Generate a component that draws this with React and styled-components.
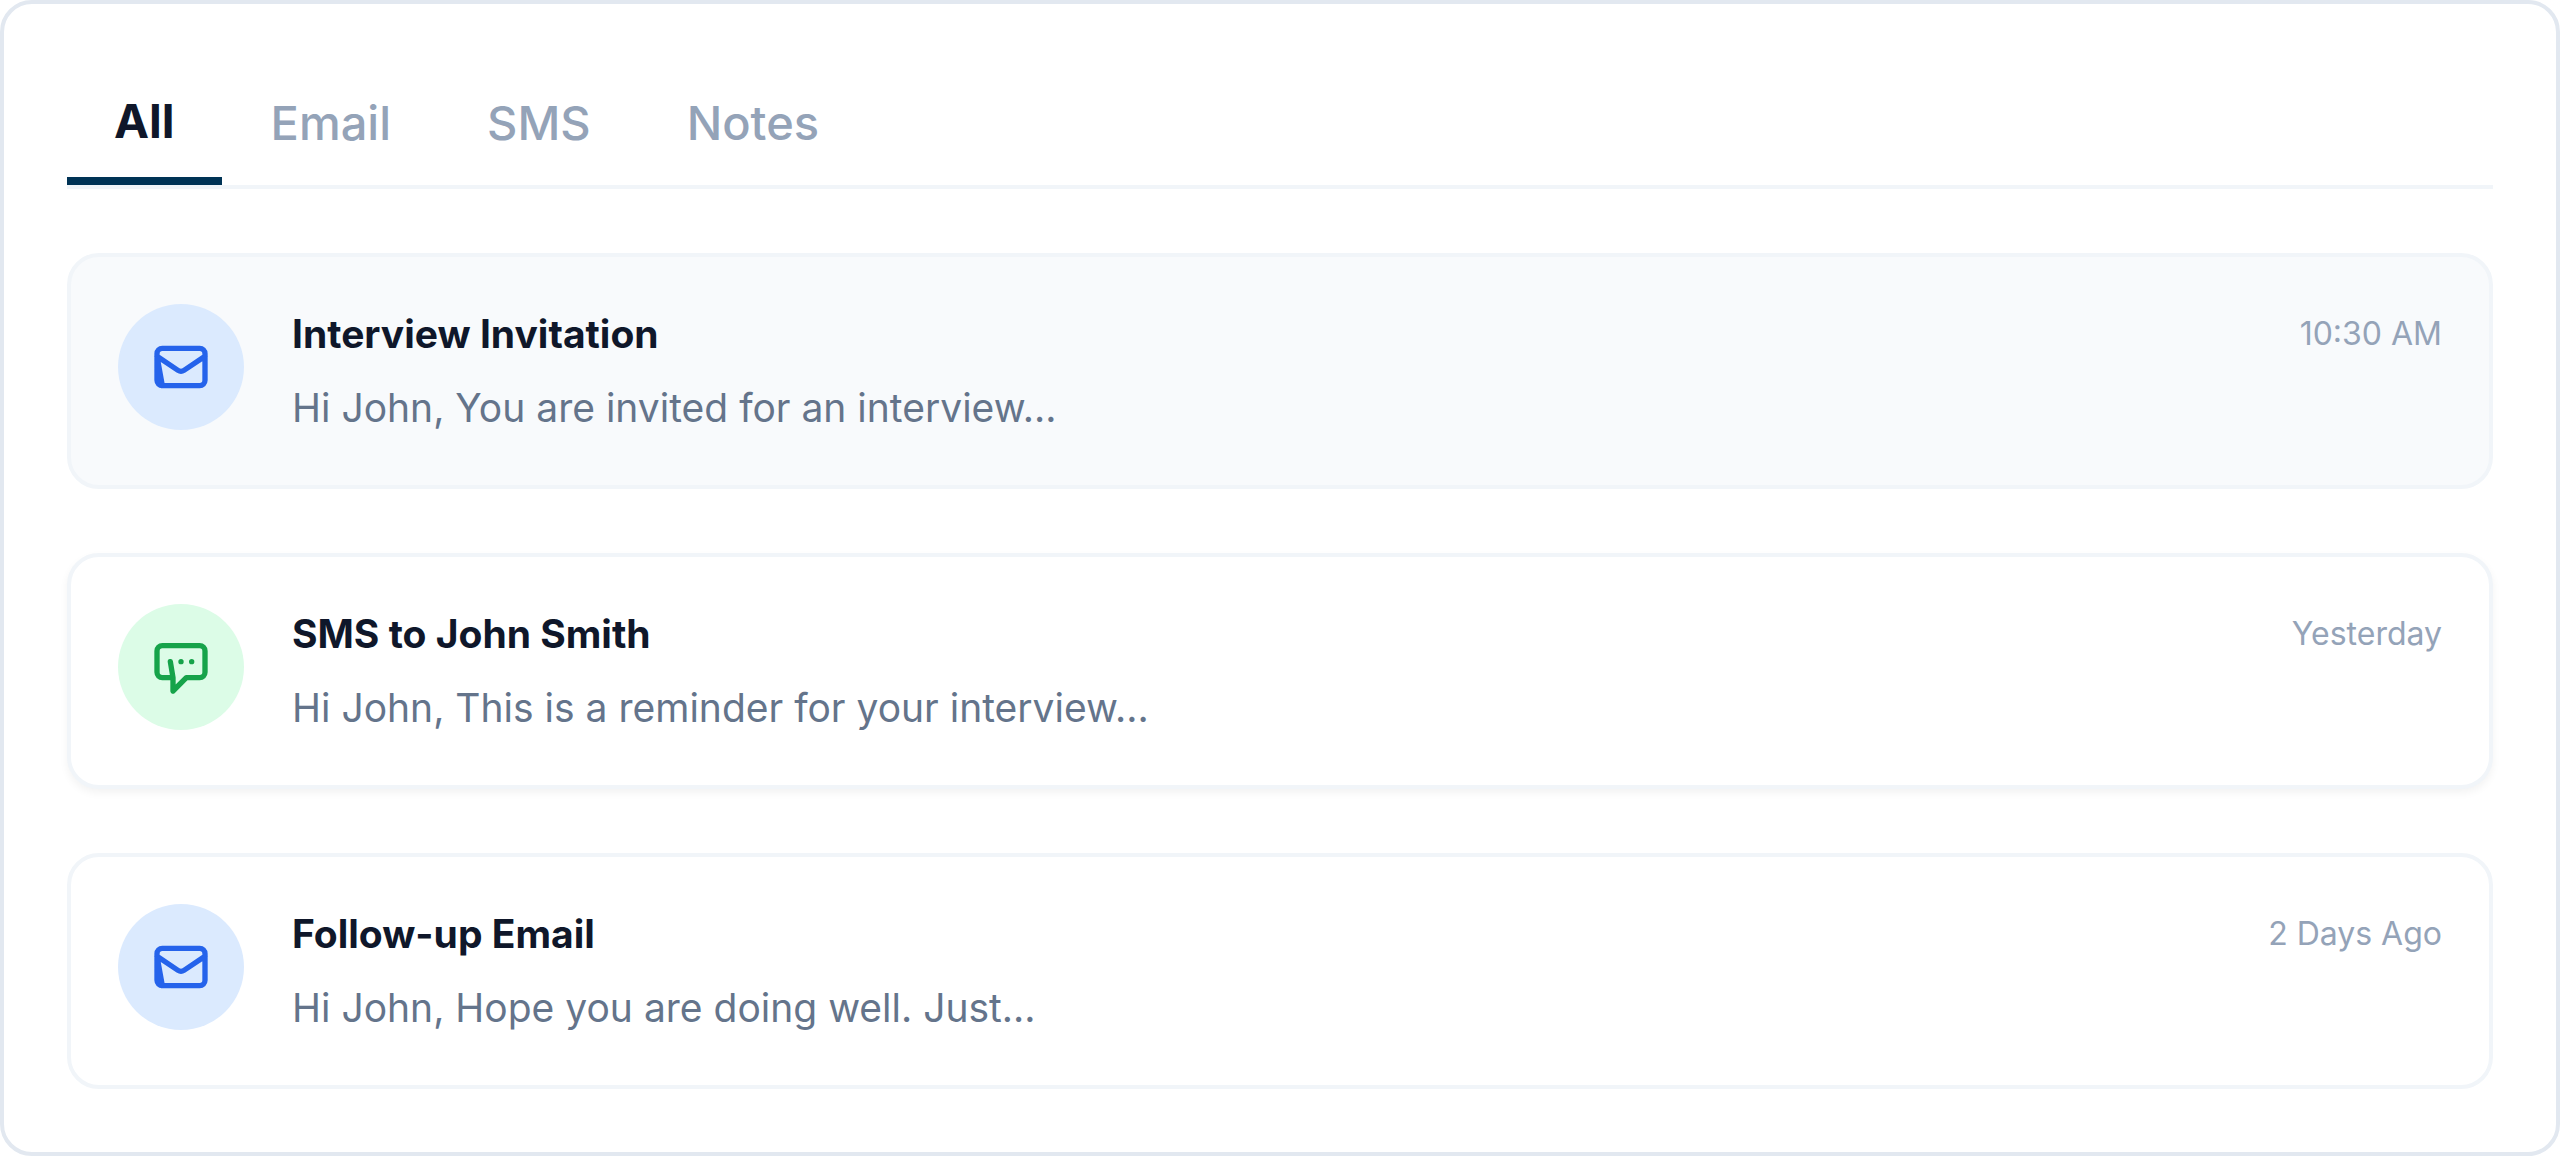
import React, { useState } from 'react'
import styled, { createGlobalStyle } from 'styled-components'

const GlobalStyle = createGlobalStyle`
  * {
    box-sizing: border-box;
  }

  body {
    margin: 0;
    background: #ffffff;
    font-family: Inter, 'Liberation Sans', sans-serif;
  }
`

const Panel = styled.main`
  padding: 63px;
  background: #ffffff;
  border: 4px solid #e2e8f0;
  border-radius: 32px;
`

const Tabs = styled.div`
  display: flex;
  align-items: center;
  gap: 2px;
  margin-bottom: 64px;
  border-bottom: 4px solid #f1f5f9;
`

const Tab = styled.button`
  padding: 24px 47px 26px;
  background: none;
  border: none;
  border-bottom: ${({ $active }) => ($active ? '8px solid #003355' : '4px solid transparent')};
  color: ${({ $active }) => ($active ? '#0f172a' : '#94a3b8')};
  font-family: inherit;
  font-size: 47px;
  font-weight: ${({ $active }) => ($active ? 700 : 500)};
  line-height: 60px;
  cursor: pointer;
`

const MessageList = styled.ul`
  display: flex;
  flex-direction: column;
  gap: 64px;
  margin: 0;
  padding: 0;
  list-style: none;
`

const Message = styled.li`
  display: flex;
  align-items: flex-start;
  gap: 48px;
  padding: 47px;
  background: ${({ $selected }) => ($selected ? '#f8fafc' : '#ffffff')};
  border: 4px solid #f1f5f9;
  border-radius: 32px;
  box-shadow: ${({ $raised }) => ($raised ? '0 4px 8px rgba(0, 0, 0, 0.05)' : 'none')};
`

const IconCircle = styled.div`
  display: flex;
  flex-shrink: 0;
  align-items: center;
  justify-content: center;
  width: 126px;
  height: 126px;
  border-radius: 50%;
  background: ${({ $type }) => ($type === 'sms' ? '#dcfce7' : '#dbeafe')};
  color: ${({ $type }) => ($type === 'sms' ? '#16a34a' : '#2563eb')};
`

const Icon = styled.svg`
  width: 64px;
  height: 64px;
  fill: none;
  stroke: currentColor;
  stroke-width: 2;
  stroke-linecap: round;
  stroke-linejoin: round;
`

const MessageBody = styled.div`
  flex: 1;
  min-width: 0;
`

const MessageHeader = styled.div`
  display: flex;
  align-items: center;
  justify-content: space-between;
  margin-bottom: 14px;
`

const Title = styled.h3`
  margin: 0;
  color: #0f172a;
  font-size: 39px;
  font-weight: 700;
  line-height: 60px;
`

const Time = styled.time`
  color: #94a3b8;
  font-size: 32px;
  line-height: 48px;
`

const Preview = styled.p`
  margin: 0;
  color: #64748b;
  font-size: 39px;
  line-height: 60px;
`

const MailIcon = () => (
  <Icon viewBox="0 0 24 24" aria-hidden="true">
    <path d="M3 8l7.89 5.26a2 2 0 002.22 0L21 8M5 19h14a2 2 0 002-2V7a2 2 0 00-2-2H5a2 2 0 00-2 2v10a2 2 0 002 2L3 8" />
  </Icon>
)

const ChatIcon = () => (
  <Icon viewBox="0 0 24 24" aria-hidden="true">
    <path d="M12 10h.01M16 10h.01M8 10l1 6H5a2 2 0 01-2-2V6a2 2 0 012-2h14a2 2 0 012 2v8a2 2 0 01-2 2h-5l-5 5v-5" />
  </Icon>
)

const tabs = ['All', 'Email', 'SMS', 'Notes']

const messages = [
  {
    type: 'email',
    title: 'Interview Invitation',
    time: '10:30 AM',
    preview: 'Hi John, You are invited for an interview...',
    selected: true,
  },
  {
    type: 'sms',
    title: 'SMS to John Smith',
    time: 'Yesterday',
    preview: 'Hi John, This is a reminder for your interview...',
    raised: true,
  },
  {
    type: 'email',
    title: 'Follow-up Email',
    time: '2 Days Ago',
    preview: 'Hi John, Hope you are doing well. Just...',
  },
]

const App = () => {
  const [activeTab, setActiveTab] = useState('All')

  return (
    <>
      <GlobalStyle />
      <Panel>
        <Tabs role="tablist">
          {tabs.map((tab) => (
            <Tab
              key={tab}
              type="button"
              role="tab"
              aria-selected={tab === activeTab}
              $active={tab === activeTab}
              onClick={() => setActiveTab(tab)}
            >
              {tab}
            </Tab>
          ))}
        </Tabs>

        <MessageList>
          {messages.map((message) => (
            <Message key={message.title} $selected={message.selected} $raised={message.raised}>
              <IconCircle $type={message.type}>
                {message.type === 'sms' ? <ChatIcon /> : <MailIcon />}
              </IconCircle>
              <MessageBody>
                <MessageHeader>
                  <Title>{message.title}</Title>
                  <Time>{message.time}</Time>
                </MessageHeader>
                <Preview>{message.preview}</Preview>
              </MessageBody>
            </Message>
          ))}
        </MessageList>
      </Panel>
    </>
  )
}

export default App
